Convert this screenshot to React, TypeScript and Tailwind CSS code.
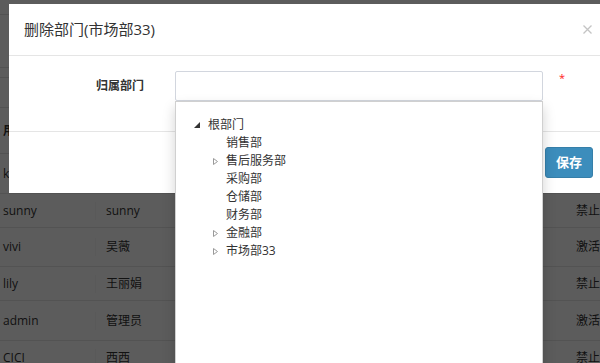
import React from "react";

const FONT = "font-['Open_Sans','Noto_Sans_CJK_SC',sans-serif]";

type Row = { a: string; b: string; c: string; h: string };

const rows: Row[] = [
  { a: "kobe", b: "kobe", c: "激活", h: "h-[40px]" },
  { a: "sunny", b: "sunny", c: "禁止", h: "h-[34px]" },
  { a: "vivi", b: "吴薇", c: "激活", h: "h-[39px]" },
  { a: "lily", b: "王丽娟", c: "禁止", h: "h-[34px]" },
  { a: "admin", b: "管理员", c: "激活", h: "h-[40px]" },
  { a: "CICI", b: "西西", c: "禁止", h: "h-[34px]" },
];

function FilledTri() {
  return (
    <svg width="6" height="6" viewBox="0 0 6 6">
      <polygon points="6,0 6,6 0,6" fill="#333" />
    </svg>
  );
}

function HollowTri() {
  return (
    <svg width="5" height="7" viewBox="0 0 5 7">
      <polygon points="0.5,0.5 4.5,3.5 0.5,6.5" fill="none" stroke="#9a9a9a" strokeWidth="1" />
    </svg>
  );
}

const children: { name: string; sub: boolean }[] = [
  { name: "销售部", sub: false },
  { name: "售后服务部", sub: true },
  { name: "采购部", sub: false },
  { name: "仓储部", sub: false },
  { name: "财务部", sub: false },
  { name: "金融部", sub: true },
  { name: "市场部33", sub: true },
];

export default function App() {
  return (
    <div className={`relative w-[600px] h-[363px] overflow-hidden bg-white text-[#333] ${FONT}`}>
      {/* background page */}
      <div className="flex flex-col text-[12px]">
        <div className="h-[15px] border-b border-[#e2e2e2]" />
        <div className="h-[53px] border-b border-[#e2e2e2]" />
        <div className="h-[10px] border-b border-[#e2e2e2]" />
        <div className="h-[30px] border-b border-[#e2e2e2]" />
        <div className="flex h-[46px] items-center border-b border-[#e2e2e2] font-bold">
          <div className="w-[96px] pl-[3px]">用户名</div>
          <div className="w-[470px] pl-[10px]">姓名</div>
          <div className="pl-[10px]">状态</div>
        </div>
        {rows.map((r) => (
          <div key={r.a} className={`flex ${r.h} items-center border-b border-[#e6e6e6]`}>
            <div className="w-[96px] pl-[3px] border-r border-[#f6f6f6]">{r.a}</div>
            <div className="w-[470px] pl-[10px]">{r.b}</div>
            <div className="pl-[10px] whitespace-nowrap">{r.c}</div>
          </div>
        ))}
      </div>

      {/* overlay */}
      <div className="absolute inset-0 bg-black/[0.64]" />

      {/* modal */}
      <div className="absolute left-[9px] top-[4px] w-[600px] bg-white">
        <div className="flex h-[52px] items-center justify-between border-b border-[#e5e5e5] pl-[15px] pr-[17px]">
          <div className="text-[15px] leading-[21px] text-[#333]">删除部门(市场部33)</div>
          <svg width="9" height="9" viewBox="0 0 9 9">
            <path d="M0.5 0.5 L8.5 8.5 M8.5 0.5 L0.5 8.5" stroke="#c4c4c4" strokeWidth="1.3" />
          </svg>
        </div>
        <div className="px-[15px] pt-[15px] pb-[30px]">
          <div className="flex items-center">
            <div className="w-[120px] text-right text-[12px] font-bold leading-[18px] text-[#333]">归属部门</div>
            <div className="relative ml-[31px] w-[368px]">
              <div className="h-[30px] rounded-[2px] border border-[#d2d6de] bg-white" />
              <div className="absolute left-0 top-full h-[300px] w-[368px] border border-[#d0d0d0] bg-white shadow-[0_6px_12px_rgba(0,0,0,0.18)] pt-[14px] text-[12px] text-[#333]">
                <div className="flex h-[18px] items-center pl-[18px]">
                  <div className="w-[14px] flex items-center">
                    <FilledTri />
                  </div>
                  <span className="leading-[18px]">根部门</span>
                </div>
                {children.map((c) => (
                  <div key={c.name} className="flex h-[18px] items-center pl-[37px]">
                    <div className="w-[13px] flex items-center">{c.sub ? <HollowTri /> : null}</div>
                    <span className="leading-[18px]">{c.name}</span>
                  </div>
                ))}
              </div>
            </div>
            <div className="ml-[16px] self-start text-[11px] leading-[14px] text-[#ff2020]">*</div>
          </div>
        </div>
        <div className="flex h-[62px] items-center justify-end border-t border-[#e5e5e5] pr-[16px]">
          <button className="h-[31px] w-[48px] rounded-[3px] border border-[#367fa9] bg-[#3c8dbc] text-[13px] font-bold text-white">
            保存
          </button>
        </div>
      </div>
    </div>
  );
}
